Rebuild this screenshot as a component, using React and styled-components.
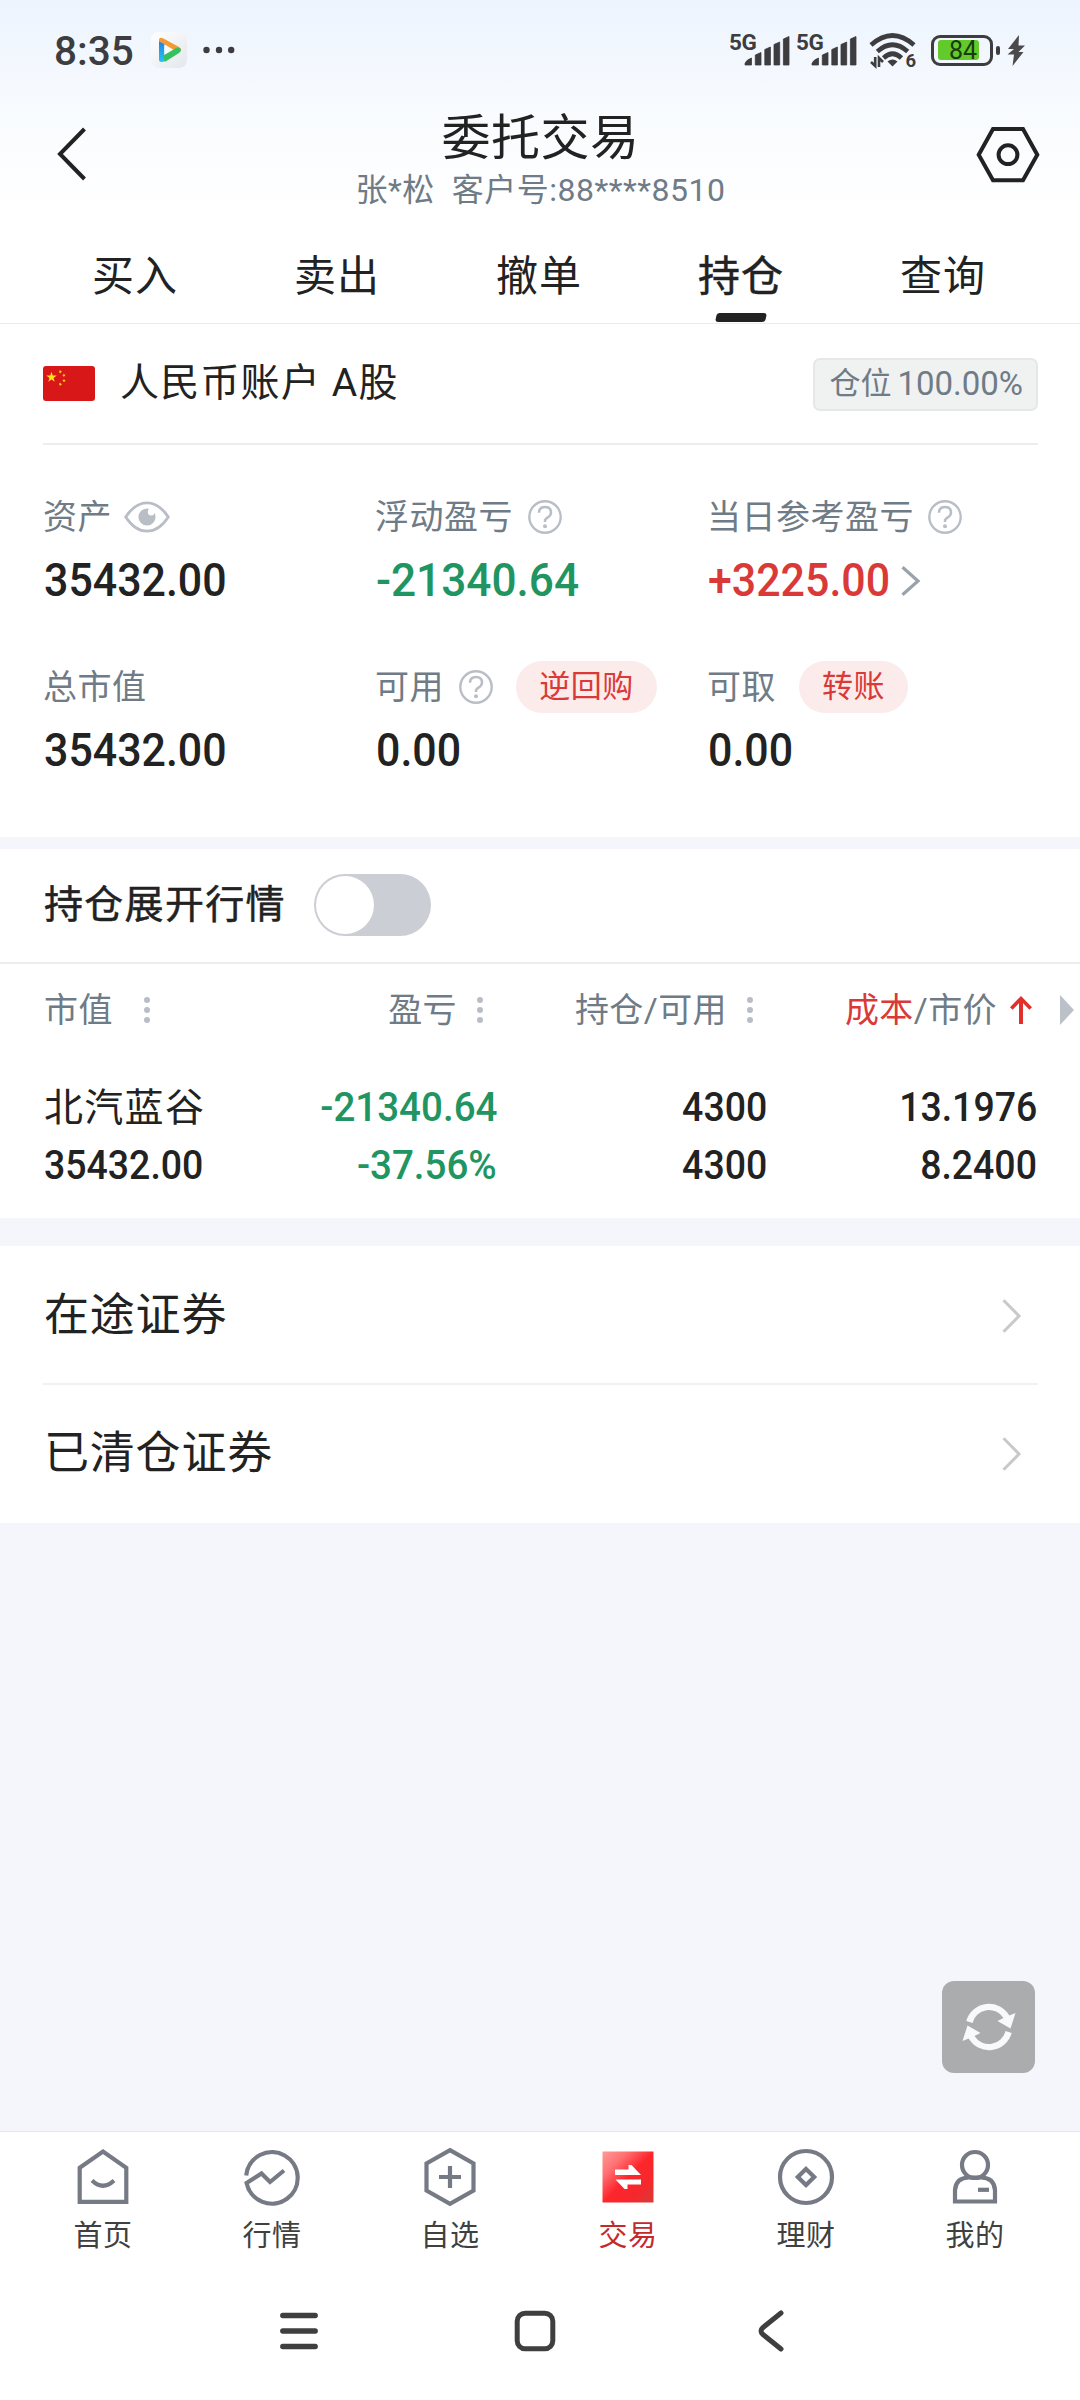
import React from "react";
import styled, { createGlobalStyle } from "styled-components";

const ink = "#222222";
const muted = "#6f7b86";
const faint = "#b9bec6";
const red = "#d93a38";
const green = "#209562";
const canvas = "#f4f6fb";

const GlobalStyle = createGlobalStyle`
  * { box-sizing: border-box; }
  body {
    margin: 0;
    background: ${canvas};
    color: ${ink};
    font-family: Roboto, "Noto Sans CJK SC", sans-serif;
  }
`;

const Screen = styled.div`
  position: relative;
  display: flex;
  flex-direction: column;
  width: 1080px;
  height: 2400px;
  overflow: hidden;
  background: ${canvas};
`;

const Icon = styled.svg`
  display: block;
  flex: none;
  overflow: visible;
`;

/* ---------- top ---------- */

const Top = styled.header`
  height: 324px;
  flex: none;
  background: linear-gradient(#edf4fe 0, #f5f9fe 80px, #fcfdff 160px, #ffffff 215px);
  border-bottom: 1px solid #ebebeb;
`;

const StatusBar = styled.div`
  display: flex;
  align-items: center;
  height: 100px;
  padding: 0 55px 0 54px;
`;

const Clock = styled.div`
  width: 97px;
  padding-top: 2px;
  font-size: 40.5px;
  font-weight: 500;
  line-height: 44px;
  color: #3d3d40;
`;

const Notifications = styled.div`
  display: flex;
  align-items: center;
  gap: 16px;
`;

const StatusIcons = styled.div`
  display: flex;
  align-items: center;
  margin-left: auto;
`;

const Signals = styled.div`
  display: flex;
  margin-right: 6px;
`;

const Signal = styled.div`
  display: flex;
  align-items: flex-start;
  width: 67px;
  height: 34px;
`;

const SignalType = styled.span`
  width: 16px;
  font-size: 22.5px;
  font-weight: 700;
  line-height: 18px;
  letter-spacing: -0.4px;
  color: #3d3d40;
`;

const Battery = styled.div`
  display: flex;
  align-items: center;
  width: 62px;
  height: 31px;
  margin-left: 14px;
  padding: 2px 4px;
  border: 3px solid #3d3d40;
  border-radius: 9px;
`;

const Charge = styled.div`
  display: flex;
  justify-content: center;
  width: 41px;
  height: 20px;
  padding-left: 9px;
  border-radius: 3px;
  background: #63ca2b;
  color: #1b3a10;
  font-size: 25px;
  font-weight: 400;
  line-height: 22px;
`;

const BatteryTip = styled.div`
  width: 4px;
  height: 9px;
  margin: 0 7px 0 3px;
  border-radius: 2px;
  background: #3d3d40;
`;

const TitleBar = styled.div`
  display: flex;
  justify-content: space-between;
  height: 114px;
  padding: 27px 40px 0 57px;
`;

const TitleText = styled.div`
  display: flex;
  flex-direction: column;
  align-items: center;
  margin-top: -20px;
  padding-left: 18px;
`;

const Title = styled.h1`
  margin: 0;
  font-size: 49px;
  font-weight: 400;
  line-height: 64px;
  letter-spacing: 0.5px;
`;

const Subtitle = styled.div`
  margin-top: -1px;
  font-size: 32px;
  font-weight: 400;
  line-height: 40px;
  letter-spacing: 0.5px;
  color: ${muted};
`;

const Tabs = styled.nav`
  display: flex;
  height: 109px;
  padding: 0 36px 0 34px;
`;

const Tab = styled.div`
  display: flex;
  flex: 1;
  flex-direction: column;
  align-items: center;
  justify-content: space-between;
  padding: 34px 0 1px;
  font-size: 42px;
  -webkit-text-stroke: ${(p) => (p.$active ? 0.5 : 0)}px ${ink};
  line-height: 58px;
  letter-spacing: 1px;
`;

const TabMark = styled.span`
  width: 50px;
  height: 9px;
  border-radius: 3px;
  background: ${ink};
  transform: skewX(-12deg);
`;

/* ---------- account ---------- */

const Account = styled.section`
  flex: none;
  height: 513px;
  padding: 0 42px 0 43px;
  background: #fff;
`;

const AccountHead = styled.div`
  display: flex;
  align-items: center;
  height: 121px;
  border-bottom: 2px solid #eceeee;
`;

const AccountName = styled.h2`
  margin: 0 auto 1px 25px;
  font-size: 39px;
  font-weight: 400;
  line-height: 56px;
  letter-spacing: 1.2px;
`;

const Ratio = styled.div`
  display: flex;
  gap: 6px;
  height: 53px;
  margin-top: 1px;
  padding: 0 13px 0 14px;
  border: 2px solid #e6e7e7;
  border-radius: 7px;
  background: #f0f1f1;
  color: ${muted};
  font-size: 31px;
  line-height: 48px;
`;

const RatioValue = styled.span`
  font-size: 33px;
`;

const Metrics = styled.div`
  display: grid;
  grid-template-columns: repeat(3, 332px);
  grid-template-rows: repeat(2, 170px);
  padding-top: 44px;
`;

const MetricLabel = styled.div`
  display: flex;
  align-items: center;
  gap: ${(p) => p.$gap}px;
  height: 56px;
  color: ${muted};
  font-size: 34px;
  line-height: 56px;
  letter-spacing: 0.5px;
`;

const MetricValue = styled.div`
  display: flex;
  align-items: center;
  height: 70px;
  padding-left: 1px;
`;

const MetricLink = styled.span`
  display: flex;
  margin: 2px 0 0 -6px;
`;

const Figure = styled.span`
  display: inline-block;
  color: ${(p) => p.$color || ink};
  font-size: ${(p) => p.$size || 47}px;
  font-weight: 500;
  line-height: 1.2;
  white-space: nowrap;
  transform: scaleX(${(p) => (p.$negative ? 0.94 : 0.913)});
  transform-origin: ${(p) => p.$origin || "left"} center;
`;

const Pill = styled.button`
  width: ${(p) => p.$width}px;
  height: 52px;
  margin: 0 0 0 8px;
  padding: 0;
  border: 0;
  border-radius: 26px;
  background: #fcebeb;
  color: ${red};
  font-family: inherit;
  font-size: 31px;
  line-height: 50px;
  letter-spacing: 0.5px;
`;

/* ---------- positions ---------- */

const Positions = styled.section`
  flex: none;
  height: 369px;
  margin-top: 12px;
  background: #fff;
`;

const ExpandRow = styled.div`
  display: flex;
  align-items: center;
  height: 115px;
  padding: 0 44px 2px;
  border-bottom: 2px solid #ececed;
`;

const ExpandLabel = styled.span`
  font-size: 39px;
  -webkit-text-stroke: 0.5px ${ink};
  line-height: 56px;
  letter-spacing: 1.3px;
`;

const Switch = styled.div`
  width: 117px;
  height: 62px;
  margin-left: 28px;
  padding: 2px;
  border-radius: 31px;
  background: #cbced4;
`;

const Knob = styled.div`
  width: 58px;
  height: 58px;
  border-radius: 50%;
  background: #fff;
`;

const HeadRow = styled.div`
  display: grid;
  grid-template-columns: 245px 238px 270px 279px 1fr;
  align-items: center;
  height: 92px;
  color: ${muted};
  font-size: 34px;
  line-height: 48px;
  letter-spacing: 0.4px;
`;

const HeadCell = styled.div`
  display: flex;
  align-items: center;
  justify-content: ${(p) => (p.$start ? "flex-start" : "flex-end")};
  gap: ${(p) => p.$gap}px;
  padding-left: ${(p) => (p.$start ? 44 : 0)}px;
`;

const HeadMore = styled.div`
  display: flex;
  padding-left: 28px;
`;

const Sorted = styled.span`
  color: ${red};
`;

const HoldingRow = styled.div`
  display: grid;
  grid-template-columns: 245px 252px 270px 270px;
  padding-top: 23px;
`;

const HoldingCell = styled.div`
  display: flex;
  flex-direction: column;
  align-items: ${(p) => (p.$start ? "flex-start" : "flex-end")};
  padding-left: ${(p) => (p.$start ? 44 : 0)}px;
`;

const Line = styled.div`
  display: flex;
  align-items: center;
  height: 58px;
`;

const StockName = styled.span`
  font-size: 39px;
  line-height: 56px;
  letter-spacing: 1.3px;
`;

/* ---------- links ---------- */

const Links = styled.section`
  flex: none;
  height: 277px;
  margin-top: 28px;
  padding: 0 42px 0 43px;
  background: #fff;
`;

const LinkRow = styled.div`
  display: flex;
  align-items: center;
  justify-content: space-between;
  height: 139px;
  padding: 0 17px 0 1px;

  & + & {
    margin-top: -2px;
    padding-top: 1px;
    border-top: 2px solid #f1f1f1;
  }
`;

const LinkLabel = styled.span`
  font-size: 45px;
  line-height: 60px;
  letter-spacing: 0.8px;
`;

/* ---------- floating refresh ---------- */

const Refresh = styled.button`
  position: absolute;
  right: 45px;
  bottom: 327px;
  display: flex;
  align-items: center;
  justify-content: center;
  width: 93px;
  height: 92px;
  padding: 0;
  border: 0;
  border-radius: 12px;
  background: #abacae;
`;

/* ---------- bottom ---------- */

const Bottom = styled.footer`
  flex: none;
  height: 269px;
  margin-top: auto;
  border-top: 1px solid #e6e7ea;
  background: #fff;
`;

const MainNav = styled.nav`
  display: flex;
  height: 130px;
  padding: 0 25px 0 23px;
`;

const NavItem = styled.div`
  display: flex;
  flex: ${(p) => (p.$edge ? "none" : 1)};
  flex-direction: column;
  align-items: center;
  width: 160px;
  padding-top: 15px;
  color: ${(p) => (p.$active ? "#c42a2a" : "#404040")};
  font-size: 29px;
  line-height: 44px;
  letter-spacing: 0.6px;
`;

const NavLabel = styled.span`
  margin-top: 7px;
`;

const SystemNav = styled.div`
  display: grid;
  grid-template-columns: repeat(3, 236px);
  align-items: center;
  justify-items: center;
  height: 138px;
  padding-left: 181px;
`;

/* ---------- drawings ---------- */

const PlayerIcon = () => (
  <Icon width="36" height="36" viewBox="0 0 36 36">
    <defs>
      <linearGradient id="tile" x1="0" y1="0" x2="1" y2="1">
        <stop offset="0" stopColor="#ffffff" />
        <stop offset="1" stopColor="#e3e7ec" />
      </linearGradient>
      <linearGradient id="blue" x1="0" y1="0" x2="0" y2="1">
        <stop offset="0" stopColor="#1f7be0" />
        <stop offset="1" stopColor="#28c3f5" />
      </linearGradient>
    </defs>
    <rect width="36" height="36" rx="8" fill="url(#tile)" />
    <rect x="8" y="7" width="5.500" height="23" rx="2.500" fill="url(#blue)" />
    <path d="M8 9.500V8.600q0-4 4-2.400L28 15q2.500 1.500 2 3.500l-4.500 1L13 12z" fill="#f39a35" />
    <path d="M30 17.800q0 2-2 3.200L15 29.300q-2 1-2-1V23l12-7q4-1.500 5 1.800z" fill="#35c160" />
    <path d="M13.300 13.200v9.600l8-4.800z" fill="#f7f9fb" />
  </Icon>
);

const MoreDots = () => (
  <Icon width="32" height="8" viewBox="0 0 32 8">
    <g fill="#3d3d40">
      <circle cx="3.500" cy="4" r="3.200" />
      <circle cx="16" cy="4" r="3.200" />
      <circle cx="28.200" cy="4" r="3.200" />
    </g>
  </Icon>
);

const Bars = () => (
  <Icon width="45" height="34" viewBox="0 0 45 34">
    <path
      d="M0 32V30.500Q1 27 6.500 25V32zM10.300 32V22L16 19.500V32zM19.800 32V16.500L25.400 14V32zM29 32V11.500L34.700 9V32zM38.400 32V6L44 3.500V32z"
      fill="#3d3d40"
      stroke="#3d3d40"
      strokeWidth="0.800"
      strokeLinejoin="round"
    />
  </Icon>
);

const WifiIcon = () => (
  <Icon width="48" height="36" viewBox="0 0 48 36">
    <g fill="none" stroke="#3d3d40" strokeWidth="4.600">
      <path d="M2 13Q23.500-6 45 13" />
      <path d="M8.300 19.500Q23.500 6 38.700 19.500" />
      <path d="M14.500 26Q23.500 17.500 32.500 26" />
    </g>
    <path d="M23.500 34.500l-5-5q5-4 10 0z" fill="#3d3d40" />
    <path d="M6.200 25v9L2 30M10 35v-9l4 4" fill="none" stroke="#3d3d40" strokeWidth="2.600" />
    <text x="36.500" y="35" fontSize="18.500" fontWeight="700" fontFamily="Roboto, sans-serif" fill="#3d3d40">6</text>
  </Icon>
);

const BoltIcon = () => (
  <Icon width="18" height="31" viewBox="0 0 18 31">
    <path d="M12 0L1 14h6L0.500 19.500H7L5.500 31L16.500 17h-5L18 10.500h-6.500z" fill="#4a4a4d" />
  </Icon>
);

const BackIcon = () => (
  <Icon width="30" height="54" viewBox="0 0 30 54">
    <path d="M27.500 2L3 27l24.500 25" fill="none" stroke={ink} strokeWidth="4" />
  </Icon>
);

const SettingsIcon = () => (
  <Icon width="64" height="56" viewBox="0 0 64 56">
    <path d="M17 2h30L61.300 27.800 47 53.300H17L2.700 27.800z" fill="none" stroke={ink} strokeWidth="4" />
    <circle cx="32" cy="27.700" r="9.400" fill="none" stroke={ink} strokeWidth="4" />
  </Icon>
);

const star = "0,-10 2.300,-3.100 9.500,-3.100 3.700,1.200 5.900,8.100 0,3.900 -5.900,8.100 -3.700,1.200 -9.500,-3.100 -2.300,-3.100";

const FlagIcon = () => (
  <Icon width="52" height="35" viewBox="0 0 52 35">
    <rect width="52" height="35" rx="3" fill="#d81818" />
    <g fill="#fbe01a">
      <polygon points={star} transform="translate(8.500 11.300) scale(.55)" />
      <polygon points={star} transform="translate(17.300 5.700) rotate(20) scale(.19)" />
      <polygon points={star} transform="translate(21 9.300) rotate(-10) scale(.19)" />
      <polygon points={star} transform="translate(21 14.600) scale(.19)" />
      <polygon points={star} transform="translate(17.300 18.200) rotate(20) scale(.19)" />
    </g>
  </Icon>
);

const EyeIcon = () => (
  <Icon width="46" height="32" viewBox="0 0 46 32">
    <path d="M1.700 16Q11 1.800 23 1.800T44.300 16Q35 30.200 23 30.200T1.700 16z" fill="none" stroke={faint} strokeWidth="2.800" />
    <circle cx="23" cy="16" r="8.600" fill={faint} />
    <circle cx="27.200" cy="11" r="3.400" fill="#fff" />
  </Icon>
);

const HelpIcon = () => (
  <Icon width="34" height="34" viewBox="0 0 34 34">
    <circle cx="17" cy="17" r="15.700" fill="none" stroke={faint} strokeWidth="2.400" />
    <path d="M11 12.800q0-5.800 6-5.800t6 5.500q0 3-3.200 4.800Q17 18.900 17 20.800V22" fill="none" stroke={faint} strokeWidth="2.500" />
    <circle cx="17" cy="26.300" r="2" fill={faint} />
  </Icon>
);

const ChevronIcon = ({ width, height, color, stroke }) => (
  <Icon width={width} height={height} viewBox={`0 0 ${width} ${height}`}>
    <path
      d={`M1.500 1.200L${width - 2} ${height / 2}L1.500 ${height - 1.2}`}
      fill="none"
      stroke={color}
      strokeWidth={stroke}
    />
  </Icon>
);

const ColumnDots = () => (
  <Icon width="6" height="28" viewBox="0 0 6 28">
    <g fill={faint}>
      <circle cx="3" cy="4" r="3" />
      <circle cx="3" cy="14" r="3" />
      <circle cx="3" cy="24" r="3" />
    </g>
  </Icon>
);

const SortUpIcon = () => (
  <Icon width="22" height="28" viewBox="0 0 22 28">
    <path d="M11 28V3" stroke="#e0302e" strokeWidth="4" />
    <path d="M1.300 12.500L11 2.500l9.700 10" fill="none" stroke="#e0302e" strokeWidth="3.600" />
  </Icon>
);

const TriangleIcon = () => (
  <Icon width="14" height="30" viewBox="0 0 14 30">
    <path d="M0 0l14 15L0 30z" fill="#bcc1c9" />
  </Icon>
);

const arrowArc =
  "M-22.700-6A23.500 23.500 0 0 1 20.300-11.500L26.500-14L21.500 1.500L8.500-6L14.500-9A17 17 0 0 0-16.500-4z";

const RefreshIcon = () => (
  <Icon width="54" height="50" viewBox="-27 -25 54 50">
    <g fill="#f8f9fb">
      <path d={arrowArc} />
      <path d={arrowArc} transform="rotate(180)" />
    </g>
  </Icon>
);

const NavFrame = ({ children }) => (
  <Icon width="60" height="60" viewBox="0 0 60 60" fill="none" stroke="#767a85" strokeWidth="4.200">
    {children}
  </Icon>
);

const HomeIcon = () => (
  <NavFrame>
    <path d="M6.700 20.800L30 4.600l23.300 16.200v34H6.700z" />
    <path d="M19 33.500q11 10.500 22 0" />
  </NavFrame>
);

const MarketIcon = () => (
  <NavFrame>
    <path d="M4.200 28.500A25.800 25.800 0 1 1 4.600 36L19.500 26.500L28 35L42 23.500" />
  </NavFrame>
);

const WatchIcon = () => (
  <NavFrame>
    <path d="M30 3.200l23.500 13.300v27L30 56.800 6.500 43.500v-27z" />
    <path d="M30 19v22M19 30h22" />
  </NavFrame>
);

const TradeIcon = () => (
  <Icon width="60" height="60" viewBox="0 0 60 60">
    <defs>
      <linearGradient id="trade" x1="0" y1="0" x2="1" y2="1">
        <stop offset="0" stopColor="#ff9a9a" />
        <stop offset=".25" stopColor="#ff7072" />
        <stop offset=".5" stopColor="#fd262c" />
        <stop offset=".75" stopColor="#f5282c" />
        <stop offset="1" stopColor="#d93a38" />
      </linearGradient>
    </defs>
    <rect x="4.500" y="4.500" width="51" height="51" fill="url(#trade)" />
    <path d="M17 22.500h13.500v-4.500h3L43 28H17zM43 37.500H29.500V42h-3L17.500 32.500H43z" fill="#fff" />
  </Icon>
);

const WealthIcon = () => (
  <NavFrame>
    <circle cx="30" cy="30" r="26" />
    <path d="M30 22l8.200 8-8.200 8-8.200-8z" />
  </NavFrame>
);

const ProfileIcon = () => (
  <NavFrame>
    <circle cx="30" cy="18" r="13" />
    <path d="M10 54.500V43q1-12.500 14-12.500h12q13 0 14 12.500v11.500z" />
    <path d="M33 42.800h11" />
  </NavFrame>
);

const MenuIcon = () => (
  <Icon width="38" height="38" viewBox="0 0 38 38">
    <path d="M2.800 3.500h32.400M2.800 19h32.400M2.800 34.500h32.400" stroke="#3f3f3f" strokeWidth="5.400" strokeLinecap="round" />
  </Icon>
);

const HomeButtonIcon = () => (
  <Icon width="42" height="42" viewBox="0 0 42 42">
    <rect x="3.200" y="3.200" width="35.600" height="35.600" rx="8" fill="none" stroke="#3f3f3f" strokeWidth="5" />
  </Icon>
);

const BackButtonIcon = () => (
  <Icon width="26" height="42" viewBox="0 0 26 42">
    <path d="M23 3L5 17.500Q1 21 5 24.500L23 39" fill="none" stroke="#3f3f3f" strokeWidth="5" strokeLinecap="round" />
  </Icon>
);

/* ---------- data ---------- */

const tabs = ["买入", "卖出", "撤单", "持仓", "查询"];

const metrics = [
  { label: "资产", icon: <EyeIcon />, gap: 12, value: "35432.00" },
  { label: "浮动盈亏", icon: <HelpIcon />, value: "-21340.64", color: green },
  { label: "当日参考盈亏", icon: <HelpIcon />, gap: 14, value: "+3225.00", color: red, link: true },
  { label: "总市值", value: "35432.00" },
  { label: "可用", icon: <HelpIcon />, action: "逆回购", actionWidth: 141, value: "0.00" },
  { label: "可取", action: "转账", actionWidth: 109, value: "0.00" },
];

const holding = [
  { lines: ["-21340.64", "-37.56%"], color: green },
  { lines: ["4300", "4300"] },
  { lines: ["13.1976", "8.2400"] },
];

const navItems = [
  { label: "首页", icon: <HomeIcon /> },
  { label: "行情", icon: <MarketIcon /> },
  { label: "自选", icon: <WatchIcon /> },
  { label: "交易", icon: <TradeIcon />, active: true },
  { label: "理财", icon: <WealthIcon /> },
  { label: "我的", icon: <ProfileIcon /> },
];

const SignalMeter = () => (
  <Signal>
    <SignalType>5G</SignalType>
    <Bars />
  </Signal>
);

export default function App() {
  return (
    <Screen>
      <GlobalStyle />
      <Top>
        <StatusBar>
          <Clock>8:35</Clock>
          <Notifications>
            <PlayerIcon />
            <MoreDots />
          </Notifications>
          <StatusIcons>
            <Signals>
              <SignalMeter />
              <SignalMeter />
            </Signals>
            <WifiIcon />
            <Battery>
              <Charge>84</Charge>
            </Battery>
            <BatteryTip />
            <BoltIcon />
          </StatusIcons>
        </StatusBar>
        <TitleBar>
          <BackIcon />
          <TitleText>
            <Title>委托交易</Title>
            <Subtitle>张*松&nbsp; 客户号:88****8510</Subtitle>
          </TitleText>
          <SettingsIcon />
        </TitleBar>
        <Tabs>
          {tabs.map((name) => (
            <Tab key={name} $active={name === "持仓"}>
              {name}
              {name === "持仓" && <TabMark />}
            </Tab>
          ))}
        </Tabs>
      </Top>

      <Account>
        <AccountHead>
          <FlagIcon />
          <AccountName>人民币账户 A股</AccountName>
          <Ratio>
            仓位<RatioValue>100.00%</RatioValue>
          </Ratio>
        </AccountHead>
        <Metrics>
          {metrics.map((m) => (
            <div key={m.label}>
              <MetricLabel $gap={m.gap || 15}>
                {m.label}
                {m.icon}
                {m.action && <Pill $width={m.actionWidth}>{m.action}</Pill>}
              </MetricLabel>
              <MetricValue>
                <Figure $color={m.color} $negative={m.value.startsWith("-")}>
                  {m.value}
                </Figure>
                {m.link && (
                  <MetricLink>
                    <ChevronIcon width={19} height={30} color="#9aa2ab" stroke={3.2} />
                  </MetricLink>
                )}
              </MetricValue>
            </div>
          ))}
        </Metrics>
      </Account>

      <Positions>
        <ExpandRow>
          <ExpandLabel>持仓展开行情</ExpandLabel>
          <Switch>
            <Knob />
          </Switch>
        </ExpandRow>
        <HeadRow>
          <HeadCell $start $gap={31}>
            市值
            <ColumnDots />
          </HeadCell>
          <HeadCell $gap={20}>
            盈亏
            <ColumnDots />
          </HeadCell>
          <HeadCell $gap={20}>
            持仓/可用
            <ColumnDots />
          </HeadCell>
          <HeadCell $gap={13}>
            <span>
              <Sorted>成本</Sorted>/市价
            </span>
            <SortUpIcon />
          </HeadCell>
          <HeadMore>
            <TriangleIcon />
          </HeadMore>
        </HeadRow>
        <HoldingRow>
          <HoldingCell $start>
            <Line>
              <StockName>北汽蓝谷</StockName>
            </Line>
            <Line>
              <Figure $size={41}>35432.00</Figure>
            </Line>
          </HoldingCell>
          {holding.map((cell) => (
            <HoldingCell key={cell.lines[0]}>
              {cell.lines.map((text, i) => (
                <Line key={i}>
                  <Figure $size={41} $color={cell.color} $negative={text.startsWith("-")} $origin="right">
                    {text}
                  </Figure>
                </Line>
              ))}
            </HoldingCell>
          ))}
        </HoldingRow>
      </Positions>

      <Links>
        {["在途证券", "已清仓证券"].map((name) => (
          <LinkRow key={name}>
            <LinkLabel>{name}</LinkLabel>
            <ChevronIcon width={19} height={34} color="#c9c9c9" stroke={3} />
          </LinkRow>
        ))}
      </Links>

      <Bottom>
        <MainNav>
          {navItems.map((item, i) => (
            <NavItem key={item.label} $active={item.active} $edge={i === 0 || i === navItems.length - 1}>
              {item.icon}
              <NavLabel>{item.label}</NavLabel>
            </NavItem>
          ))}
        </MainNav>
        <SystemNav>
          <MenuIcon />
          <HomeButtonIcon />
          <BackButtonIcon />
        </SystemNav>
      </Bottom>

      <Refresh aria-label="刷新">
        <RefreshIcon />
      </Refresh>
    </Screen>
  );
}
